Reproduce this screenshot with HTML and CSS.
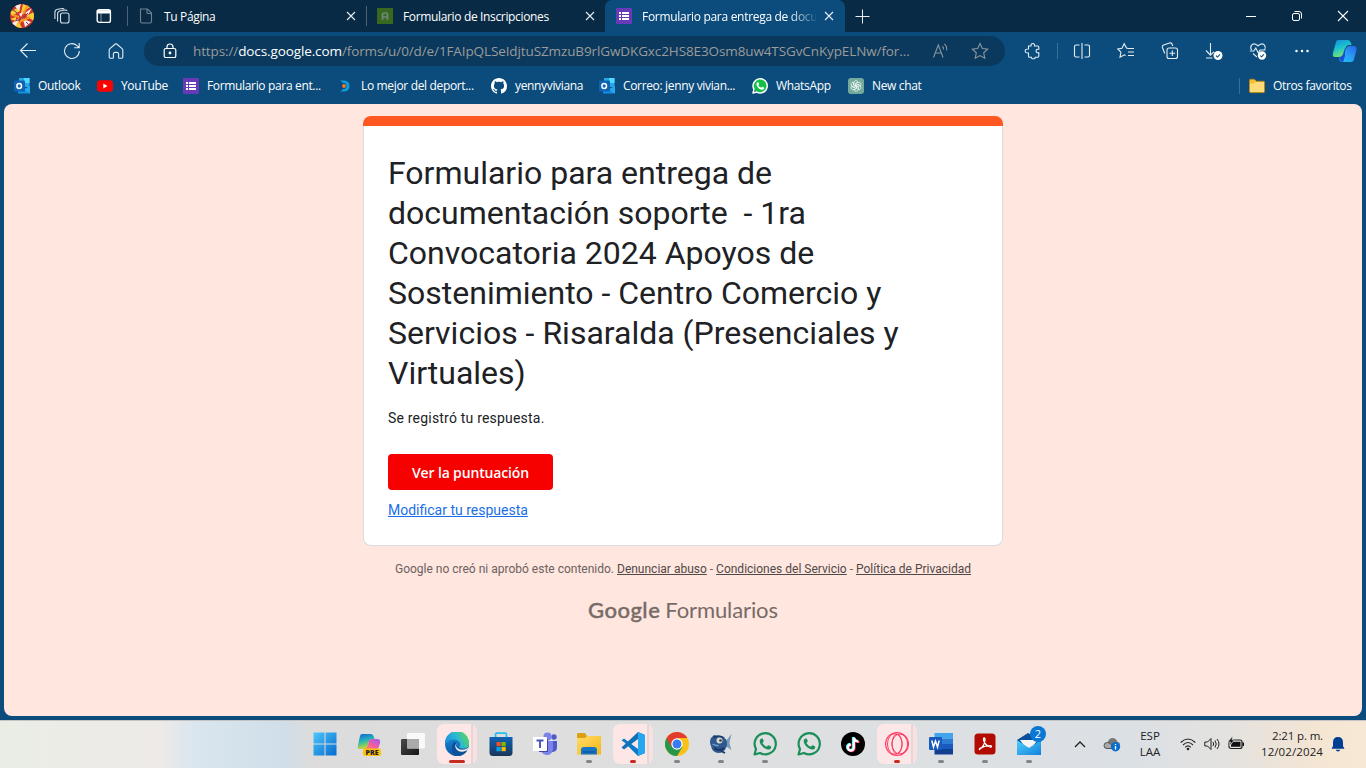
FILE: index.html
```html
<!DOCTYPE html>
<html lang="es">
<head>
<meta charset="utf-8">
<title>Formulario para entrega de documentación soporte</title>
<link rel="stylesheet" href="styles.css">
</head>
<body>
<svg class="defs" aria-hidden="true">
  <defs>
    <linearGradient id="gWin" x1="0" y1="0" x2="1" y2="1"><stop offset="0" stop-color="#4cc8fb"/><stop offset="1" stop-color="#0669ce"/></linearGradient>
    <linearGradient id="gCopA" x1="0" y1="0" x2=".4" y2="1"><stop offset="0" stop-color="#1a86d8"/><stop offset=".5" stop-color="#18c2d2"/><stop offset="1" stop-color="#7be36b"/></linearGradient>
    <linearGradient id="gCopB" x1="1" y1="0" x2="0" y2="1"><stop offset="0" stop-color="#2a62e8"/><stop offset=".5" stop-color="#2a9cf5"/><stop offset="1" stop-color="#22c9f4"/></linearGradient>
    <linearGradient id="gPreA" x1="0" y1="0" x2=".3" y2="1"><stop offset="0" stop-color="#1560d8"/><stop offset=".5" stop-color="#25b5b5"/><stop offset="1" stop-color="#c8d831"/></linearGradient>
    <linearGradient id="gPreB" x1="1" y1="0" x2="0" y2="1"><stop offset="0" stop-color="#9a5cf0"/><stop offset=".5" stop-color="#ef5aa8"/><stop offset="1" stop-color="#ff8f4a"/></linearGradient>
    <linearGradient id="gEdgeA" x1="0" y1=".6" x2="1" y2=".2"><stop offset="0" stop-color="#1b8ede"/><stop offset=".5" stop-color="#2bb8d2"/><stop offset="1" stop-color="#62d84e"/></linearGradient>
    <linearGradient id="gEdgeB" x1="0" y1="0" x2="0" y2="1"><stop offset="0" stop-color="#1a96df"/><stop offset="1" stop-color="#0b55a8"/></linearGradient>
    <linearGradient id="gStore" x1="0" y1="0" x2="0" y2="1"><stop offset="0" stop-color="#0f63b5"/><stop offset="1" stop-color="#1a3558"/></linearGradient>
    <linearGradient id="gFold" x1="0" y1="0" x2="1" y2="1"><stop offset="0" stop-color="#ffdc6b"/><stop offset="1" stop-color="#f6b613"/></linearGradient>
    <linearGradient id="gDark" x1="0" y1="0" x2="1" y2="1"><stop offset="0" stop-color="#4a4a4a"/><stop offset="1" stop-color="#161616"/></linearGradient>
    <linearGradient id="gMail" x1="0" y1="0" x2="1" y2="1"><stop offset="0" stop-color="#4fd0fa"/><stop offset="1" stop-color="#1380dc"/></linearGradient>
    <symbol id="outlook" viewBox="0 0 16 16"><path d="M5 0h10.500v9H5z" fill="#28a8ea"/><path d="M10 0h5.500v5H10z" fill="#50d9ff"/><path d="M5 5h5v4H5z" fill="#0a64b8"/><path d="M4 8l6 3.500L16 8v7.500H4z" fill="#1490df"/><path d="M16 8v7.500L9.500 11.500z" fill="#28a8ea"/><rect y="2.500" width="11" height="11" rx=".8" fill="#0f62b4"/><ellipse cx="5.200" cy="8" rx="2.300" ry="2.500" fill="none" stroke="#fff" stroke-width="1.500"/></symbol>
    <symbol id="forms" viewBox="0 0 16 16"><rect width="16" height="16" rx=".8" fill="#673ab7"/><path d="M3 4h2v2H3zm0 3h2v2H3zm0 3h2v2H3zM6 4h7v2H6zm0 3h7v2H6zm0 3h7v2H6z" fill="#fff"/></symbol>
    <symbol id="close" viewBox="0 0 10 10"><path d="M1 1l8 8M9 1L1 9" stroke="#e8eef3" stroke-width="1.100" fill="none"/></symbol>
    <symbol id="wa" viewBox="0 0 24 24"><path d="M1.500 22.500L3 17A10.600 10.600 0 1 1 7 21z" fill="none" stroke="currentColor" stroke-width="2.200" stroke-linejoin="round"/><path d="M8.500 6.500c-.4 0-1.800.8-1.800 2.700 0 3.500 5.100 8.300 8.600 8.300 1.800 0 3-1.200 3-2.600 0-.6-2.500-1.700-3-1.700-.6 0-1 1.400-1.700 1.400-.8 0-4-2.600-4-3.600 0-.6 1.100-1.100 1.100-1.800 0-.4-.9-2.700-1.200-2.700z" fill="currentColor"/></symbol>
  </defs>
</svg>

<header class="tabstrip">
  <svg class="avatar" viewBox="0 0 24 24"><clipPath id="av"><circle cx="12" cy="12" r="12"/></clipPath><g clip-path="url(#av)"><path fill="#d0362d" d="M0 0h24v24H0z"/><path d="M0 8l9-5 1 4-8 5zM13 0l-2 9 9-6zM24 8l-8 4 8 5zM4 24l4-8 4 8zM0 15l6-2v4z" fill="#f7cf35"/><path d="M4 1l5 6 2-7zM15 9l7-5-4 7zM13 15l2 8 6-5zM1 20l8-6-3 8zM9 10l5-3-3 6z" fill="#f8ece4"/><path d="M18 1l-5 9M3 11l6 2M20 13l-8 4M9 20l4-6" stroke="#f49a25" stroke-width="2"/><path d="M2 5l5 4M18 9l-6 6M5 17l6-2M16 18l3 3" stroke="#7d3a5c" stroke-width="1"/></g></svg>
  <svg class="ic-space" viewBox="0 0 18 18" fill="none" stroke="#d6e0e8" stroke-width="1.100"><rect x="7.500" y="6" width="8.500" height="10" rx="2"/><path d="M4.600 14.500V7q0-3 3-3.300l5-.7q1.200 0 1.600.8M1.900 12V5.500q0-2.800 2.700-3.200l5-.8q1.200 0 1.600.8"/></svg>
  <svg class="ic-panel" viewBox="0 0 16 16" fill="none" stroke="#fff" stroke-width="1.400"><rect x="1.200" y="1.800" width="13.200" height="12.600" rx="2"/><path d="M1.500 3h12.800v1.700H1.500z" fill="#fff"/><path d="M5 5v9" stroke-width=".5"/></svg>
  <i class="vline"></i>
  <div class="tab">
    <svg class="fav" viewBox="0 0 16 16" fill="none" stroke="#6f8291" stroke-width="1.100"><path d="M2.500 1h7l4 4v8.500q0 1.500-1.500 1.500H4q-1.500 0-1.500-1.500zM9 1v3.500q0 1 1 1h3.500"/></svg>
    <span class="tab-t">Tu Página</span><svg class="x"><use href="#close"/></svg>
  </div>
  <i class="vline"></i>
  <div class="tab">
    <svg class="fav" viewBox="0 0 16 16"><path fill="#37691f" d="M0 0h16v16H0z"/><path d="M5.500 12V6.500q0-1.500 1.500-1.500h2q1.500 0 1.500 1.500V12M5.500 9h5" fill="none" stroke="#71867b" stroke-width="1.700"/></svg>
    <span class="tab-t">Formulario de Inscripciones</span><svg class="x"><use href="#close"/></svg>
  </div>
  <div class="tab active">
    <svg class="fav"><use href="#forms"/></svg>
    <span class="tab-t">Formulario para entrega de docu</span><svg class="x"><use href="#close"/></svg>
  </div>
  <svg class="plus" viewBox="0 0 16 16"><path d="M8.500 1.500v14M1.500 8.500h14" stroke="#e8eef3" stroke-width="1"/></svg>
  <div class="winbtns">
    <svg viewBox="0 0 12 12"><path d="M1 6.500h10" stroke="#fff"/></svg>
    <svg viewBox="0 0 12 12" fill="none" stroke="#fff"><rect x="1.500" y="3.500" width="7" height="7" rx="1.500"/><path d="M3.500 1.500H8q2.500 0 2.500 2.500v4.500"/></svg>
    <svg viewBox="0 0 12 12"><path d="M1 1l10 10M11 1L1 11" stroke="#fff" stroke-width="1.100"/></svg>
  </div>
</header>

<nav class="toolbar">
  <div class="slot"><svg class="i18" viewBox="0 0 18 18"><path d="M17 8.500H1.500M8.500 1.500l-7 7 7 7"/></svg></div>
  <div class="slot"><svg class="i18" viewBox="0 0 18 18"><path d="M16.300 9A7.400 7.400 0 1 1 14 3.700L16 5.500M16.200 1v4.700h-5"/></svg></div>
  <div class="slot"><svg class="i18" viewBox="0 0 18 18"><path d="M2.200 15V8q0-.8.700-1.400L8.300 2q.7-.6 1.400 0l5.400 4.600q.7.600.7 1.400v7q0 1.200-1.200 1.200h-2.200q-.8 0-.8-.8v-3.300q0-1.700-1.600-1.700H8q-1.600 0-1.600 1.700v3.300q0 .8-.8.800H3.400Q2.200 16.200 2.200 15z"/></svg></div>
  <div class="address">
    <svg class="lock" viewBox="0 0 16 16"><rect x="2.200" y="5.500" width="11.600" height="9" rx="1.600"/><path d="M5 5.500V4q0-3 3-3t3 3v1.500"/><circle cx="8" cy="10" r=".8" fill="#fff"/></svg>
    <span class="url">https://<b>docs.google.com</b>/forms/u/0/d/e/1FAIpQLSeIdjtuSZmzuB9rlGwDKGxc2HS8E3Osm8uw4TSGvCnKypELNw/for...</span>
    <svg class="i18 dim read" viewBox="0 0 18 18"><path d="M1.500 15.500L6.300 3l4.800 12.500M3.200 11h6.200M10.300 4.300q1.500 1.200 1.200 3.200M12.300 1.800q3 2.500 2.300 6.500M9 6"/></svg>
    <svg class="i18 dim" viewBox="0 0 18 18"><path d="M9 1.500l2.300 5 5.400.6-4 3.700 1.100 5.500L9 13.600l-4.800 2.700 1.100-5.500-4-3.700 5.400-.6z"/></svg>
  </div>
  <div class="slot ext"><svg class="i18" viewBox="0 0 18 18"><path d="M4.500 4H7q-.2-2.500 1.800-2.500T10.600 4h3.200q1 0 1 1v2.300q-2.700-.3-2.700 1.700t2.700 1.700V14q0 1.200-1 1.200h-2.600q.1 1.600-1.900 1.600t-1.900-1.600H5.500q-1 0-1-1V11Q1.200 11.200 1.200 9t3.300-2z"/></svg></div>
  <i class="vline tool"></i>
  <div class="slot"><svg class="i18" viewBox="0 0 18 18"><path d="M6.500 3H3q-1.500 0-1.500 1.500v9Q1.500 15 3 15h3.500M11.500 3H15q1.500 0 1.500 1.500v9q0 1.500-1.500 1.500h-3.500M9 1v16"/></svg></div>
  <div class="slot"><svg class="i18" viewBox="0 0 18 18"><path d="M11 6.500L9.500 6 7.200 1.700 5 6.300l-4.300.6 3.200 3.200L3 15.300l4.400-2.500 1.200.8M11 6.500h6M11 10h6M11 13.500h6"/></svg></div>
  <div class="slot"><svg class="i18" viewBox="0 0 18 18"><rect x="6" y="6" width="10.500" height="10.500" rx="2"/><path d="M11.300 8.500v5.600M8.500 11.300h5.600M3.800 11.500L1.500 5.700q-.7-2 1.200-2.700L8.500 1q1.800-.5 2.500 1l.8 2"/></svg></div>
  <div class="slot"><svg class="i18" viewBox="0 0 18 18"><path d="M5.500 1v12M1 8.500l4.500 4.700 3.500-3.500M1 16h6.500"/><circle cx="13" cy="13.500" r="4.500" fill="#fff" stroke="none"/><path d="M11 13.600l1.500 1.400 2.500-2.700" stroke="#0b4c7c"/></svg></div>
  <div class="slot"><svg class="i18" viewBox="0 0 18 18"><path d="M2.600 8C.2 4.500 3.300 1 6.500 2.200Q8 2.800 9 4q1-1.200 2.500-1.800C15 1 17.600 4.500 15.600 8M.8 9h4l2-3 2.500 5L11 8h5.500M4 11.500l4 3.700"/><circle cx="13" cy="13.500" r="4.200" fill="#fff" stroke="none"/><path d="M11.300 13.600l1.300 1.200 2.200-2.400" stroke="#0b4c7c"/></svg></div>
  <div class="slot dots"><svg class="i18" viewBox="0 0 18 18"><g fill="#fff" stroke="none"><circle cx="3.500" cy="9" r="1.250"/><circle cx="9" cy="9" r="1.250"/><circle cx="14.500" cy="9" r="1.250"/></g></svg></div>
  <svg class="copilot" viewBox="0 0 26 24"><path d="M6 1h10q2 0 3 3l.5 2h-3q-2 0-3 3l-2 7q-.7 2-3 2H3q-3 0-2-4L4 3q.5-2 2-2z" fill="url(#gCopA)"/><path d="M17 7h5q3 0 2.500 4l-2.400 9q-.7 3-3 3H10q-2.500 0-3-4 3 1 4-2l3-7.500Q15 7 17 7z" fill="url(#gCopB)"/><path d="M7 18q3 0 4-3l2-6v8l-2 6q-3 0-4-5z" fill="#1b4dd6"/></svg>
</nav>

<nav class="bookmarks">
  <a><svg class="fav"><use href="#outlook"/></svg><span class="b1">Outlook</span></a>
  <a><svg class="fav" viewBox="0 0 16 16"><rect y="2.300" width="16" height="11.400" rx="3" fill="#f00"/><path d="M6.300 5.500v5L10.500 8z" fill="#fff"/></svg><span class="b2">YouTube</span></a>
  <a><svg class="fav"><use href="#forms"/></svg><span class="b3">Formulario para ent...</span></a>
  <a><svg class="fav" viewBox="0 0 16 16"><path d="M3 2.500h4q5.500.3 5.500 5.500T7 13.500H3q2.300-1 3-2.500h1q2.500 0 2.500-3T7 5H6Q5 3.500 3 2.500z" fill="#0f9ddd"/><circle cx="7" cy="8" r="1.900" fill="#f47b20"/></svg><span class="b4">Lo mejor del deport...</span></a>
  <a><svg class="fav" viewBox="0 0 16 16"><path fill="#fff" d="M8 0C3.580 0 0 3.580 0 8c0 3.540 2.290 6.530 5.470 7.590.4.070.55-.17.55-.38 0-.19-.01-.82-.01-1.490-2.010.37-2.530-.49-2.690-.94-.09-.23-.48-.94-.82-1.130-.28-.15-.68-.52-.01-.53.63-.01 1.080.58 1.230.82.72 1.210 1.870.87 2.330.66.070-.52.280-.87.510-1.070-1.780-.2-3.640-.89-3.640-3.950 0-.87.310-1.590.82-2.150-.08-.2-.36-1.020.08-2.120 0 0 .67-.21 2.200.82.64-.18 1.320-.27 2-.27s1.360.09 2 .27c1.530-1.040 2.200-.82 2.200-.82.440 1.100.16 1.920.08 2.120.51.560.82 1.270.82 2.150 0 3.070-1.870 3.750-3.650 3.950.29.250.54.730.54 1.480 0 1.070-.01 1.930-.01 2.200 0 .21.150.46.550.38A8.010 8.010 0 0 0 16 8c0-4.420-3.580-8-8-8z"/></svg><span class="b5">yennyviviana</span></a>
  <a><svg class="fav"><use href="#outlook"/></svg><span class="b6">Correo: jenny vivian...</span></a>
  <a><svg class="fav wa-white" viewBox="0 0 24 24"><circle cx="12.500" cy="11.500" r="10.500" fill="#12c143"/><use href="#wa"/></svg><span class="b7">WhatsApp</span></a>
  <a><svg class="fav" viewBox="0 0 16 16"><rect width="16" height="16" rx="3" fill="#74aa9c"/><g fill="none" stroke="#e9f4f1" stroke-width=".8"><path id="petal" d="M6 8V4.800q0-2 1.800-2.200 1.500 0 2.200 1.300L7.500 5.500V9"/><use href="#petal" transform="rotate(60 8 8)"/><use href="#petal" transform="rotate(120 8 8)"/><use href="#petal" transform="rotate(180 8 8)"/><use href="#petal" transform="rotate(240 8 8)"/><use href="#petal" transform="rotate(300 8 8)"/></g></svg><span class="b8">New chat</span></a>
  <i class="vline"></i>
  <a class="others"><svg class="fav" viewBox="0 0 16 16"><path d="M.5 2.500q0-1.200 1.200-1.200h3.500l2 2h7.200q1.100 0 1.100 1.200v9q0 1.100-1.100 1.100H1.600Q.5 14.600.5 13.500z" fill="#ffdc7a" stroke="#b88916"/><path d="M1 2h4.500l1.500 1.500-2 2H1z" fill="#f6c02c"/></svg><span class="b9">Otros favoritos</span></a>
</nav>

<main class="page">
  <div class="stripe"></div>
  <section class="card">
    <h1>Formulario para entrega de documentación soporte&nbsp; - 1ra Convocatoria 2024 Apoyos de Sostenimiento - Centro Comercio y Servicios - Risaralda (Presenciales y Virtuales)</h1>
    <p class="msg">Se registró tu respuesta.</p>
    <a class="score">Ver la puntuación</a>
    <a class="edit">Modificar tu respuesta</a>
  </section>
  <p class="legal">Google no creó ni aprobó este contenido. <u>Denunciar abuso</u> - <u>Condiciones del Servicio</u> - <u>Política de Privacidad</u></p>
  <div class="logo"><b>Google</b><span>Formularios</span></div>
</main>

<footer class="taskbar">
  <div class="apps">
    <div class="app"><svg viewBox="0 0 24 24" fill="url(#gWin)"><path d="M.5.500h11v11H.5zM12.500.500h11v11h-11zM.5 12.500h11v11H.5zM12.500 12.500h11v11h-11z"/></svg></div>
    <div class="app"><svg viewBox="0 0 24 24"><path d="M5 2h9q2 0 3 3l.5 2h-3q-2 0-2.500 3l-1.500 5q-.6 2-3 2H3q-3 0-2-4L3 4q.5-2 2-2z" fill="url(#gPreA)"/><path d="M14 7h6q4 0 3 4l-2 6H6q4-.5 5-4l1-4q.5-2 2-2z" fill="url(#gPreB)"/><rect x="6" y="16.500" width="18" height="7.500" rx="2" fill="#ffc20e"/></svg><span class="pre">PRE</span></div>
    <div class="app"><svg viewBox="0 0 24 24"><rect y="7" width="18" height="16" rx="1" fill="url(#gDark)"/><rect x="6" y="1" width="18" height="15.500" rx="1" fill="#fff" fill-opacity=".82"/><path d="M6 7h12v9.500H6z" fill="#aaa"/></svg></div>
    <div class="app hot"><svg viewBox="0 0 24 24"><circle cx="12" cy="12" r="12" fill="url(#gEdgeB)"/><path d="M0 11A12 12 0 0 1 24 11q.2 5.500-5.500 5.500-4.500 0-4.200-2.300 1.300-1.200.7-3.200Q13.500 7.500 9 7.500 3 7.500 0 13z" fill="url(#gEdgeA)"/><path d="M9.300 9.500Q4 15 9.500 24q8 1 12.500-5-7 3-10.500-1.300-2.500-3.500 0-6.500z" fill="#0c5299"/><path d="M11.800 11q-2 3 .7 5.200 4 3 9.500.4l1.500-.8q-1 3-2.200 2.800-6 2.900-9.500-.9-3-3.500 0-6.700z" fill="#fde6e6"/></svg><i class="run wide"></i></div>
    <div class="app"><svg viewBox="0 0 24 24"><path d="M6.500 6V2.500q0-1.300 1.300-1.300h8.400q1.300 0 1.300 1.300V6" fill="none" stroke="#22bdf2" stroke-width="1.700"/><path d="M.5 5h23v15.500q0 3.500-3.500 3.500H4Q.5 24 .5 20.500z" fill="url(#gStore)"/><path d="M7.500 10h4.200v4.200H7.500z" fill="#f25022"/><path d="M12.500 10h4.200v4.200h-4.200z" fill="#7fba00"/><path d="M7.500 15h4.200v4.200H7.500z" fill="#00a4ef"/><path d="M12.500 15h4.200v4.200h-4.200z" fill="#ffb900"/></svg></div>
    <div class="app"><svg viewBox="0 0 24 24"><circle cx="21" cy="5" r="2.700" fill="#5059c9"/><circle cx="14.500" cy="4.500" r="4" fill="#7b83eb"/><path d="M17 9h7v7q-.5 4-5 4z" fill="#5059c9"/><path d="M9 9h11v8q-1 6-6 6-4 0-6-4z" fill="#7b83eb"/><path d="M4 7h11v13H6z" fill="#3f479f"/><rect y="5" width="14" height="14" rx="1" fill="#fff"/><path d="M3.500 8.500h7M7 8.500V16" stroke="#4b53bc" stroke-width="1.900"/></svg></div>
    <div class="app"><svg viewBox="0 0 24 24"><path d="M0 2q0-1 1-1h7l2 3h13q1 0 1 1v17H0z" fill="#dca112"/><path d="M0 6h8l2-2h13q1 0 1 1v17.500H0z" fill="url(#gFold)"/><path d="M4 22.500V18q0-3 3-3h10q3 0 3 3v4.500z" fill="#1674c9"/><path d="M6 20h12" stroke="#0c589f" stroke-width="1.500"/></svg><i class="run"></i></div>
    <div class="app hot"><svg viewBox="0 0 24 24"><path d="M17 0l7 3v18l-7 3L3 10 .5 8.500 3 6.500 17 17z" fill="#0a7bc8"/><path d="M17 0v7L3 17.500.5 15.500 17 0z" fill="#1170b6"/><path d="M17 0l7 3v18l-7 3z" fill="#28a7f1"/></svg><i class="run red"></i></div>
    <div class="app"><svg viewBox="0 0 24 24"><circle cx="12" cy="12" r="12" fill="#fbc116"/><path d="M12 12L1.600 6A12 12 0 0 0 12 24l5.500-9z" fill="#27964a"/><path d="M1.600 6A12 12 0 0 1 22.400 6H12v6L6 14z" fill="#e33b2e"/><circle cx="12" cy="12" r="5.700" fill="#fff"/><circle cx="12" cy="12" r="4.500" fill="#377df0"/></svg><i class="run"></i></div>
    <div class="app"><svg viewBox="0 0 24 24"><path d="M16 10l6.500-8q-1.500 6-2 9 1 4 2 7l-6-4z" fill="#7b9cba"/><path d="M2 6l3-3 4 1 6 1q5 5 2 11-2 5-8 5-6-1-7-7-2-4 0-8z" fill="#2f588e"/><path d="M4.500 5.500q5-3 9.500 0M5 16q5 4 10 0M12 19l4 2" fill="none" stroke="#1a3768" stroke-width="1.700"/><path d="M3.500 12q3 2 6 1.500" stroke="#6fa0ca" fill="none" stroke-width="1.500"/><circle cx="10.500" cy="8.500" r="3" fill="#dad9d0"/><circle cx="11.500" cy="8.500" r="1.300" fill="#303c48"/></svg><i class="run"></i></div>
    <div class="app green"><svg><use href="#wa"/></svg><i class="run"></i></div>
    <div class="app green"><svg><use href="#wa"/></svg></div>
    <div class="app"><svg viewBox="0 0 24 24"><circle cx="12" cy="12" r="12"/><g fill="none" stroke-width="2.300"><path d="M12 5v10a3 3 0 1 1-3-3M12 5q1 4 5 4" stroke="#25f4ee"/><path d="M13.500 6v10a3 3 0 1 1-3-3M13.500 6q1 4 5 4" stroke="#fe2c55"/><path d="M12.800 5.500v10a3 3 0 1 1-3-3M12.800 5.500q1 4 4.600 4" stroke="#fff"/></g></svg></div>
    <div class="app hot"><svg viewBox="0 0 24 24" fill="none" stroke="#fb3a65"><circle cx="12" cy="12" r="11.400" stroke-width="1.200"/><ellipse cx="12" cy="12" rx="5" ry="9.800"/><ellipse cx="14.800" cy="12" rx="7.800" ry="9.900"/><ellipse cx="9.800" cy="12" rx="7.300" ry="10.300"/></svg><i class="run red"></i></div>
    <div class="app"><svg viewBox="0 0 24 24"><path d="M5.500 1H24v5.500H5.500z" fill="#41a5ee"/><path d="M5.500 6.500H24V12H5.500z" fill="#2b7cd3"/><path d="M5.500 12H24v5H5.500z" fill="#185abd"/><path d="M5.500 17H24v5.500H5.500z" fill="#103f91"/><rect y="5" width="13" height="13" rx="1" fill="#185abd"/><path d="M2.800 8.500l1.700 6.500 2-6 2 6 1.700-6.500" fill="none" stroke="#fff" stroke-width="1.500"/></svg><i class="run"></i></div>
    <div class="app"><svg viewBox="0 0 24 24"><rect x="1.500" y="1.500" width="21" height="21" rx="3.500" fill="#b30b00"/><path d="M6.500 17.500q5-3.500 5.500-9.500.1-2 -.8-2-1 0-.5 2.500 1.500 5 6.500 6.500 1.300.2 1.300-.6t-1.500-.8q-5 0-9.500 2.500-1.500 1-1 1.400z" fill="none" stroke="#fff" stroke-width="1.300"/></svg><i class="run"></i></div>
    <div class="app"><svg viewBox="0 0 24 24"><path d="M0 8l11-7 13 7v5H0z" fill="#0b4f9a"/><path d="M3 8h18l-6 7H8z" fill="#f4f4f4"/><path d="M0 8l12 8 12-8v15H0z" fill="url(#gMail)"/></svg><span class="badge">2</span><i class="run"></i></div>
  </div>
  <svg class="chev" viewBox="0 0 12 12"><path d="M1 9l5-5 5 5" fill="none" stroke="#222" stroke-width="1.300"/></svg>
  <svg class="cloud" viewBox="0 0 18 16"><path d="M4 12.500q-3 0-3-3t3.500-3Q6 2 9.500 2t5 4q2.500 0 2.500 3z" fill="#777" /><path d="M4 12.500q-3 0-3-3t3.500-3q2.500 0 4 2.500l3 3.500z" fill="#aaa" stroke="#555"/><circle cx="12.500" cy="10.800" r="4.700" fill="#0a6ed1"/><path d="M12.500 10v3.500M12.500 8v1" stroke="#fff" stroke-width="1.300"/></svg>
  <div class="lang">ESP<br>LAA</div>
  <div class="status">
    <svg viewBox="0 0 16 16" fill="none" stroke="#222" stroke-width="1.100"><path d="M.7 6.500q7.300-7 14.600 0M3 9q5-5 10 0M5.200 11.300q2.800-2.800 5.600 0"/><circle cx="8" cy="13" r="1.300" fill="#222" stroke="none"/></svg>
    <svg viewBox="0 0 16 16" fill="none" stroke="#222"><path d="M.8 6h2.700L7 2.500v11L3.500 10H.8zM9 6q1.300 2 0 4M11 4.500q2.500 3.500 0 7M13 3q4 5 0 10"/></svg>
    <svg viewBox="0 0 16 16"><rect x="1" y="4" width="13" height="8.500" rx="2" fill="none" stroke="#222" stroke-width="1.200"/><path d="M5 5.700h7.500v5H3V9zM14.500 6.500H16V10h-1.500z" fill="#111"/><path d="M4.500 0L0 6h2.500L1.500 9.500 6.500 4H4z" fill="#111" stroke="#dfe1e3" stroke-width=".6"/></svg>
  </div>
  <div class="clock"><div class="time">2:21 p. m.</div><div class="date">12/02/2024</div></div>
  <svg class="bell" viewBox="0 0 14 16"><path d="M2 6.500Q2 1 7 1t5 5.500V10l1.500 2.800H.5L2 10z" fill="#003e92"/><path d="M4.800 13.800h4.400Q8.800 15.500 7 15.500t-2.200-1.700z" fill="#003e92"/></svg>
</footer>
</body>
</html>
```
FILE: styles.css
```css
* { box-sizing: border-box; }
body {
  margin: 0;
  width: 1366px;
  height: 768px;
  overflow: hidden;
  display: flex;
  flex-direction: column;
  background: #0b4c7c;
  font-family: "Open Sans", "Noto Sans", sans-serif;
  font-size: 12px;
  color: #fff;
}
svg { display: block; flex: none; }
p, h1 { margin: 0; font-weight: 400; }
.defs { position: absolute; width: 0; height: 0; }

/* Tab strip */
.tabstrip { height: 32px; flex: none; display: flex; align-items: center; background: #082a45; padding-left: 10px; }
.avatar { width: 24px; height: 24px; }
.ic-space { width: 18px; height: 18px; margin-left: 19px; }
.ic-panel { width: 16px; height: 16px; margin-left: 25px; }
.vline { width: 1px; height: 20px; background: #4d6273; flex: none; }
.ic-panel + .vline { margin-left: 15px; }
.tab { width: 238px; height: 32px; display: flex; align-items: center; padding: 0 10px; flex: none; }
.tab.active { width: 240px; background: #0b4c7c; border-radius: 7px 7px 0 0; padding-left: 11px; padding-right: 11px; }
.fav { width: 16px; height: 16px; }
.tab-t { flex: 1; min-width: 0; margin-left: 10px; margin-right: 8px; white-space: nowrap; letter-spacing: -.35px; }
.tab.active .tab-t { letter-spacing: -.3px; -webkit-mask-image: linear-gradient(90deg, #000 84%, transparent 102%); mask-image: linear-gradient(90deg, #000 84%, transparent 102%); }
.x { width: 10px; height: 10px; }
.plus { width: 16px; height: 16px; margin-left: 9px; }
.winbtns { display: flex; margin-left: auto; padding-right: 17px; gap: 34px; }
.winbtns svg { width: 12px; height: 12px; }

/* Toolbar */
.toolbar { height: 38px; flex: none; display: flex; align-items: center; padding-left: 6px; }
.slot { width: 44px; display: flex; justify-content: center; flex: none; }
.i18 { width: 18px; height: 18px; fill: none; stroke: #e5edf3; stroke-width: 1.100; }
.dim { stroke: #8b969d; }
.address { width: 861px; height: 30px; margin-left: 6px; border-radius: 15px; background: #0a395d; display: flex; align-items: center; padding: 0 16px 0 18px; flex: none; }
.lock { width: 16px; height: 16px; fill: none; stroke: #fff; stroke-width: 1.200; }
.url { margin-left: 15px; width: 717px; font-size: 13.500px; letter-spacing: -.11px; color: #9b9b9b; white-space: nowrap; flex: none; }
.url b { font-weight: 400; color: #fff; }
.read { margin-left: 22px; margin-right: 21px; }
.ext { margin-left: 6px; }
.vline.tool { background: #3b6e94; height: 16px; margin: 0 2px; }
.vline.tool ~ .slot { width: 44px; }
.copilot { width: 26px; height: 24px; margin-left: 8px; }

/* Favourites */
.bookmarks { height: 34px; flex: none; display: flex; align-items: center; padding: 0 14px 2px; }
.bookmarks a { display: flex; align-items: center; gap: 8px; margin-right: 16px; white-space: nowrap; }
.bookmarks span { margin-top: -1px; letter-spacing: -.34px; }
.bookmarks .vline { margin-left: auto; margin-right: 9px; height: 16px; background: #3b6e94; }
.bookmarks .others { margin-right: 0; }
.b1 { width: 43px; } .b2 { width: 46px; } .b3 { width: 114px; } .b4 { width: 114px; } .b5 { width: 68px; }
.b6 { width: 113px; } .b7 { width: 56px; } .b8 { width: 50px; } .b9 { width: 79px; }
.wa-white { color: #fff; }

/* Form page */
.page { margin: 0 4px 4px; height: 612px; flex: none; background: #ffe6df; border-radius: 8px; padding-top: 12px; display: flex; flex-direction: column; align-items: center; font-family: Roboto, sans-serif; }
.stripe { width: 640px; height: 10px; flex: none; background: #ff5722; border-radius: 8px 8px 0 0; }
.card { width: 640px; height: 420px; background: #fff; border: 1px solid #dadce0; border-top: 0; border-radius: 0 0 8px 8px; padding: 27px 24px 0; color: #202124; display: flex; flex-direction: column; align-items: flex-start; }
h1 { font-size: 32px; line-height: 40px; width: 560px; }
.msg { font-size: 14px; line-height: 20px; letter-spacing: .2px; margin-top: 15px; }
.score { margin-top: 26px; width: 165px; height: 36px; border-radius: 4px; background: #f60000; color: #fff; display: flex; align-items: center; justify-content: center; font-size: 14px; font-weight: 600; letter-spacing: -.15px; font-family: "Open Sans", sans-serif; white-space: nowrap; }
.edit { margin-top: 10px; font-size: 14px; line-height: 20px; color: #1a6fe8; text-decoration: underline; }
.legal { margin-top: 15px; font-size: 12px; line-height: 16px; color: #6b615e; white-space: nowrap; }
.legal u { color: #514947; }
.logo { margin-top: 18px; width: 190px; height: 30px; line-height: 30px; display: flex; gap: 5px; color: #766b67; font-family: Lato, sans-serif; font-size: 22px; white-space: nowrap; }
.logo b { font-weight: 500; letter-spacing: .5px; -webkit-text-stroke: .4px #766b67; }
.logo span { letter-spacing: -.1px; }

/* Taskbar */
.taskbar { height: 48px; flex: none; border-top: 1px solid #c4c4c4; display: flex; align-items: center; padding-left: 303px; padding-bottom: 1px; color: #222; background: linear-gradient(90deg, #e9eee5 0, #edebe7 100px, #edeae7 160px, #d9e6ef 195px, #d0dee9 285px, #dcdcdc 310px, #dedede 560px, #dde0e2 900px, #dbe0e5 1130px, #e4e2df 1230px, #f5e5d3 1320px, #f7e8d5 100%); }
.apps { display: flex; }
.app { width: 44px; height: 40px; position: relative; display: flex; align-items: center; justify-content: center; }
.app svg { width: 24px; height: 24px; z-index: 1; }
.app.hot { background: linear-gradient(90deg, #fde6e6 34px, #e5d7d8 34px 36px, #f9e0e1 36px); background-clip: padding-box; border-left: 2px solid transparent; border-right: 2px solid transparent; border-radius: 8px; }
.green { color: #1a8f58; }
.run { position: absolute; left: 19px; bottom: 1px; width: 6px; height: 3px; border-radius: 2px; background: #858585; }
.run.red { left: 17px; background: #c52b1f; }
.run.wide { left: 12px; width: 16px; background: #c52b1f; }
.pre { position: absolute; z-index: 2; left: 17px; top: 25px; width: 16px; font-size: 7px; line-height: 8px; font-weight: 800; text-align: center; }
.badge { position: absolute; z-index: 2; left: 23px; top: 2px; width: 16px; height: 16px; border-radius: 50%; background: #0878d4; color: #fff; font-size: 11px; line-height: 16px; text-align: center; }
.chev { width: 12px; height: 12px; margin-left: 23px; }
.cloud { width: 18px; height: 16px; margin-left: 17px; }
.lang { width: 32px; margin-left: 13px; font-size: 11.500px; line-height: 16px; text-align: center; }
.status { display: flex; gap: 8px; margin-left: 14px; }
.status svg { width: 16px; height: 16px; }
.clock { width: 68px; margin-left: 11px; font-size: 11.500px; line-height: 16px; text-align: right; white-space: nowrap; }
.date { letter-spacing: .1px; }
.time { letter-spacing: -.15px; }
.bell { width: 14px; height: 16px; margin-left: 8px; }
```
